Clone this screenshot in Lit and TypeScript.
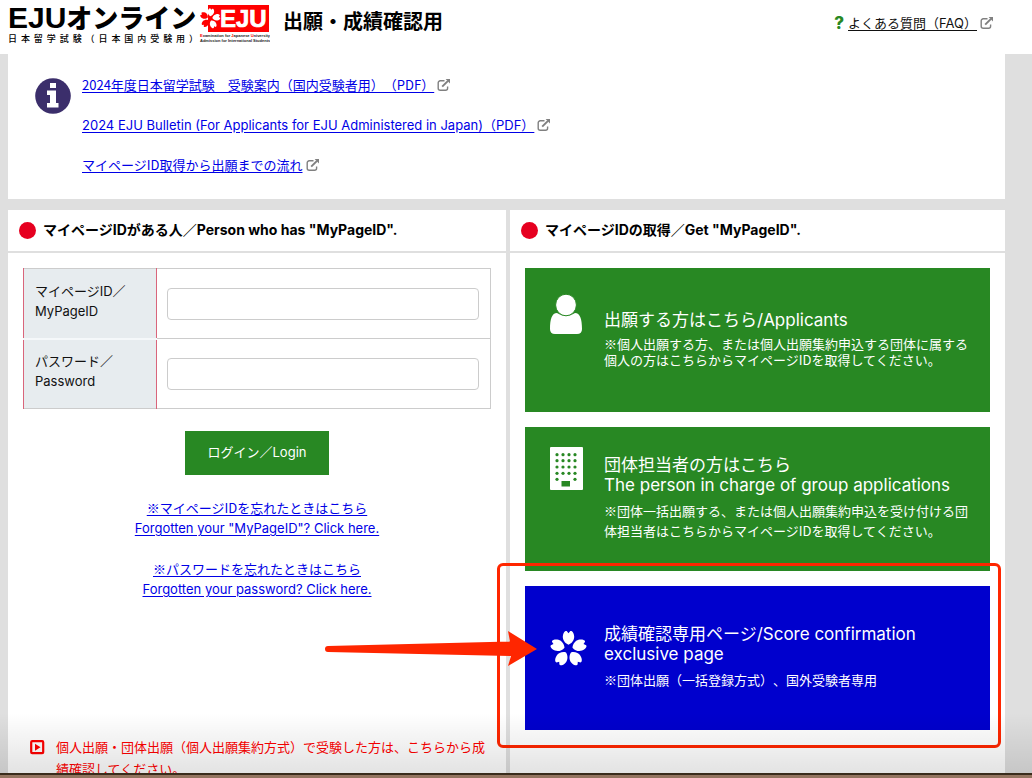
import { LitElement, html, svg, css } from "lit";
import { customElement } from "lit/decorators.js";

const externalIcon = html`<svg class="ext" viewBox="0 0 14 12" aria-hidden="true">
  <path d="M7.5 1.8H3.2A2 2 0 0 0 1.2 3.8v5.4a2 2 0 0 0 2 2h5.4a2 2 0 0 0 2-2V7.6" fill="none" stroke="#808080" stroke-width="1.4"/>
  <path d="M5.2 7.6 11 1.9" stroke="#808080" stroke-width="2" fill="none"/>
  <path d="M8.6 0H13v4.4z" fill="#808080"/>
</svg>`;

const petalAngles = [0, 72, 144, 216, 288];
const petal = "M0-4.2C-3.6-5.6-5.8-9-5.7-12.4C-5.6-15-4.4-17.2-3-18H-1.8L0-15.8 1.8-18H3C4.4-17.2 5.6-15 5.7-12.4C5.8-9 3.6-5.6 0-4.2z";

@customElement("app-root")
export class AppRoot extends LitElement {
  static styles = css`
    :host {
      display: block;
      position: relative;
      height: 100vh;
      overflow: hidden;
      background: #dfdfdf;
      color: #111;
      font: 13px/20px Inter, "Noto Sans CJK JP", sans-serif;
      text-spacing-trim: space-all;
    }
    * { box-sizing: border-box; }
    a { color: #0000e6; text-underline-offset: 2px; }
    .jp, .note { font-family: "Noto Sans CJK JP", sans-serif; }
    .page { display: flex; flex-direction: column; min-height: 100%; }
    .header {
      display: flex;
      justify-content: space-between;
      align-items: flex-start;
      height: 54px;
      padding: 4px 38px 0 8px;
      background: #fff;
    }
    .brand { display: flex; align-items: flex-start; }
    .wordmark { width: 190px; font-family: "Liberation Sans", "Noto Sans CJK JP", sans-serif; color: #000; }
    .name { display: block; font-size: 26px; line-height: 28px; font-weight: 900; white-space: nowrap; }
    .name .latin { font-size: 30px; }
    .sub { display: block; font-size: 9px; line-height: 12px; font-weight: 500; text-align: justify; text-align-last: justify; white-space: nowrap; }
    .badge { display: block; width: 72px; height: 40px; }
    .heading { margin: 0 0 0 13px; font-size: 20px; line-height: 36px; font-weight: 700; color: #000; }
    .faq { display: flex; align-items: center; gap: 4px; padding-top: 9px; }
    .faq a { color: #111; }
    .q { color: #288823; font-size: 17px; font-weight: 800; }
    .ext { width: 14px; height: 12px; margin-left: 3px; vertical-align: -1px; }
    .main { display: flex; flex-direction: column; flex: 1; gap: 11px; margin: 0 27px 0 8px; }
    .info { display: flex; gap: 11px; padding: 21px 27px 24px; background: #fff; }
    .info-icon { width: 36px; height: 36px; flex: none; margin-top: 3px; }
    .info-links { display: flex; flex-direction: column; gap: 20px; }
    .cols { display: grid; grid-template-columns: 498fr 495fr; gap: 4px; flex: 1; }
    .panel { background: #fff; min-width: 0; }
    .panel h2 {
      display: flex;
      align-items: center;
      gap: 7px;
      margin: 0;
      padding: 10px 11px 11px;
      border-bottom: 2px solid #dfdfdf;
      font-size: 14px;
      line-height: 20px;
      font-weight: 700;
      color: #000;
    }
    .dot { width: 17px; height: 17px; border-radius: 50%; background: #e60020; }
    .body { padding: 15px; }
    .form { display: flex; flex-direction: column; align-items: center; }
    .fields { width: 100%; border-collapse: collapse; border: 1px solid #ccc; }
    .fields th {
      width: 133px;
      height: 70px;
      padding: 0 11px 5px;
      text-align: left;
      font-weight: 400;
      background: #e7ecef;
      border-left: 1px solid #d9657b;
      border-right: 1px solid #d9657b;
    }
    .fields tr + tr th { border-top: 2px solid #f5f8fa; }
    .fields td { padding: 0 11px 0 10px; border-top: 1px solid #ccc; }
    .fields input { display: block; width: 100%; height: 32px; padding: 4px 8px; border: 1px solid #ccc; border-radius: 4px; background: #fff; font: inherit; }
    .login { width: 144px; height: 44px; margin-top: 22px; padding: 0 0 2px; border: 0; background: #288823; color: #fff; font: inherit; }
    .forgot { margin: 23px 0 0; text-align: center; }
    .forgot + .forgot { margin-top: 21px; }
    .notice { display: flex; gap: 11px; align-self: stretch; margin: 137px 0 0; padding-left: 7px; color: #ff0000; line-height: 22px; }
    .play { width: 15px; height: 15px; flex: none; margin-top: 4px; }
    .tiles { display: flex; flex-direction: column; gap: 15px; }
    .tile { display: flex; align-items: center; gap: 15px; height: 144px; padding: 0 20px 0 24px; background: #288823; color: #fff; text-decoration: none; }
    .tile.score { background: #0000cd; }
    .tile svg { width: 40px; height: 144px; flex: none; }
    .copy { display: flex; flex-direction: column; gap: 6px; padding-bottom: 3px; }
    .title { font-size: 17px; line-height: 20px; }
    .note.tight { line-height: 16px; }
    .marked { position: relative; }
    .frame { position: absolute; inset: -23px -11px -18px -28px; border: 3px solid #ff2600; border-radius: 6px; pointer-events: none; }
    .arrow { position: absolute; left: -201px; top: 44px; width: 214px; height: 38px; pointer-events: none; }
    .shade { position: absolute; left: 0; right: 0; bottom: 5px; height: 60px; background: linear-gradient(rgba(0,0,0,0), rgba(0,0,0,.11)); pointer-events: none; }
    .edge { position: absolute; left: 0; right: 0; bottom: 0; height: 5px; background: linear-gradient(#3a2c1c 0 2px, #947560 2px 5px); }
  `;

  private badgePetal(angle: number) {
    const onRed = angle <= 144;
    return svg`<path d=${petal} fill=${onRed ? "#fff" : "#ff0000"} transform=${`rotate(${angle + 8}) scale(.56)`}></path>`;
  }

  private tileIcon(kind: string) {
    if (kind === "user") {
      return html`<svg viewBox="0 0 40 144" aria-hidden="true" fill="#fff">
        <path d="M8 45C3 45 1 51 1 61q0 5 5 5h22q5 0 5-5C33 51 31 45 26 45q-4 3-9 3t-9-3z"/>
        <ellipse cx="17" cy="37" rx="10.4" ry="10.8" stroke="#288823" stroke-width="1"/>
      </svg>`;
    }
    if (kind === "building") {
      const rows = [27.7, 33.7, 40, 46.3, 52.3];
      return html`<svg viewBox="0 0 40 144" aria-hidden="true">
        <rect x="1" y="20" width="33" height="43" rx="1" fill="#fff"/>
        ${rows.map((y, r) => [8, 14, 20, 26].filter((_, c) => r < 4 || c % 3 === 0).map((x) =>
          svg`<circle cx=${x} cy=${y} r="1.6" fill="#288823"></circle>`))}
        <rect x="12.5" y="54" width="8.5" height="5.5" fill="#288823"/>
      </svg>`;
    }
    return html`<svg viewBox="0 0 40 144" aria-hidden="true">
      <g transform="translate(19.5 63)">
        ${petalAngles.map((a) => svg`<path d=${petal} fill="#fff" transform=${`rotate(${a})`}></path>`)}
      </g>
    </svg>`;
  }

  render() {
    return html`
      <div class="page">
        <header class="header">
          <div class="brand">
            <div class="wordmark">
              <span class="name"><span class="latin">EJU</span>オンライン</span>
              <span class="sub">日本留学試験（日本国内受験用）</span>
            </div>
            <svg class="badge" viewBox="0 0 72 40" role="img" aria-label="EJU">
              <rect x="10" y="1" width="61" height="27" fill="#ff0000"/>
              <g transform="translate(12 14.5)">${petalAngles.map((a) => this.badgePetal(a))}</g>
              <text x="22" y="23" font-family="Liberation Sans" font-weight="700" font-size="24" fill="#fff" stroke="#fff" stroke-width=".7">EJU</text>
              <text x="2" y="33" font-family="Liberation Sans" font-weight="700" font-size="4" fill="#222"><tspan fill="#f00">E</tspan>xamination for <tspan fill="#f00">J</tspan>apanese <tspan fill="#f00">U</tspan>niversity</text>
              <text x="2" y="38" font-family="Liberation Sans" font-weight="700" font-size="4" fill="#222">Admission for International Students</text>
            </svg>
            <h1 class="heading">出願・成績確認用</h1>
          </div>
          <div class="faq"><span class="q">?</span><span><a href="#faq">よくある質問（FAQ）</a>${externalIcon}</span></div>
        </header>
        <main class="main">
          <section class="info">
            <svg class="info-icon" viewBox="0 0 36 36" aria-hidden="true">
              <circle cx="18" cy="18" r="17.8" fill="#3b2e6b"/>
              <path d="M15 5h6v5h-6zM12 12.5h9V25h2.5v4.5H12V25h3v-8h-3z" fill="#fff"/>
            </svg>
            <div class="info-links">
              <div><a class="jp" href="#guide">2024年度日本留学試験　受験案内（国内受験者用）（PDF）</a>${externalIcon}</div>
              <div><a href="#bulletin">2024 EJU Bulletin (For Applicants for EJU Administered in Japan)（PDF）</a>${externalIcon}</div>
              <div><a class="jp" href="#flow">マイページID取得から出願までの流れ</a>${externalIcon}</div>
            </div>
          </section>
          <div class="cols">
            <section class="panel">
              <h2><span class="dot"></span>マイページIDがある人／Person who has "MyPageID".</h2>
              <form class="body form" @submit=${(e: Event) => e.preventDefault()}>
                <table class="fields">
                  <tr>
                    <th><label for="pageid">マイページID／<br>MyPageID</label></th>
                    <td><input id="pageid" type="text"></td>
                  </tr>
                  <tr>
                    <th><label for="password">パスワード／<br>Password</label></th>
                    <td><input id="password" type="password"></td>
                  </tr>
                </table>
                <button class="login" type="submit">ログイン／Login</button>
                <p class="forgot"><a href="#forgot-id"><span class="jp">※マイページIDを忘れたときはこちら</span><br>Forgotten your "MyPageID"? Click here.</a></p>
                <p class="forgot"><a href="#forgot-password"><span class="jp">※パスワードを忘れたときはこちら</span><br>Forgotten your password? Click here.</a></p>
                <p class="notice">
                  <svg class="play" viewBox="0 0 15 15" aria-hidden="true"><rect x="1.2" y="1.2" width="12" height="12" rx="1" fill="none" stroke="#ff0000" stroke-width="2.2"/><path d="M5 3.8v7l5.5-3.5z" fill="#ff0000"/></svg>
                  <span>個人出願・団体出願（個人出願集約方式）で受験した方は、こちらから成績確認してください。</span>
                </p>
              </form>
            </section>
            <section class="panel">
              <h2><span class="dot"></span>マイページIDの取得／Get "MyPageID".</h2>
              <div class="body tiles">
                <a class="tile" href="#applicants">
                  ${this.tileIcon("user")}
                  <span class="copy">
                    <span class="title">出願する方はこちら/Applicants</span>
                    <span class="note tight">※個人出願する方、または個人出願集約申込する団体に属する個人の方はこちらからマイページIDを取得してください。</span>
                  </span>
                </a>
                <a class="tile" href="#group">
                  ${this.tileIcon("building")}
                  <span class="copy">
                    <span class="title">団体担当者の方はこちら<br>The person in charge of group applications</span>
                    <span class="note">※団体一括出願する、または個人出願集約申込を受け付ける団体担当者はこちらからマイページIDを取得してください。</span>
                  </span>
                </a>
                <div class="marked">
                  <a class="tile score" href="#score">
                    ${this.tileIcon("flower")}
                    <span class="copy">
                      <span class="title">成績確認専用ページ/Score confirmation exclusive page</span>
                      <span class="note">※団体出願（一括登録方式）、国外受験者専用</span>
                    </span>
                  </a>
                  <div class="frame"></div>
                  <svg class="arrow" viewBox="0 0 214 38" aria-hidden="true"><path d="M4 16 186 11.5 184 1 213 19 184 36 187 26 4 22Q1 22 1 19t3-3z" fill="#ff2600"/></svg>
                </div>
              </div>
            </section>
          </div>
        </main>
      </div>
      <div class="shade"></div>
      <div class="edge"></div>
    `;
  }
}
